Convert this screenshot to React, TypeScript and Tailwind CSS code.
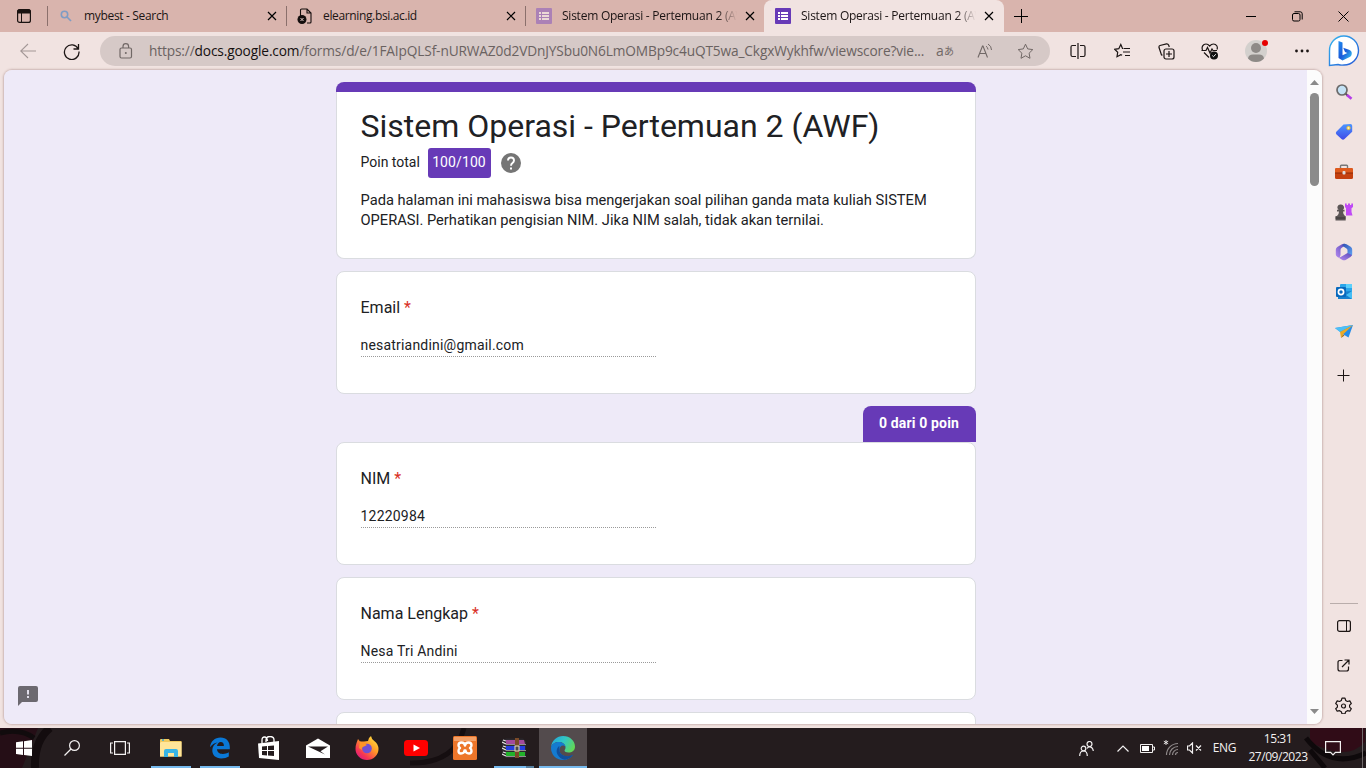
import React from "react";

type IconProps = { w: number; h?: number; vb?: string; className?: string; children: React.ReactNode };

function Icon({ w, h = w, vb, className = "", children }: IconProps) {
  return (
    <svg
      width={w}
      height={h}
      viewBox={vb ?? `0 0 ${w} ${h}`}
      fill="none"
      stroke="currentColor"
      className={"block shrink-0 " + className}
    >
      {children}
    </svg>
  );
}

function Cell({ className, children }: { className: string; children?: React.ReactNode }) {
  return <div className={"flex shrink-0 items-center justify-center " + className}>{children}</div>;
}

const CloseX = () => (
  <Icon w={10}>
    <path d="M1 1l8 8M9 1l-8 8" strokeWidth="1.2" />
  </Icon>
);

const FormsIcon = ({ faded }: { faded?: boolean }) => (
  <Icon w={16} className={faded ? "-ml-px opacity-50" : "-ml-px"}>
    <rect width="16" height="16" rx="1" fill={faded ? "#7f4fc0" : "#673ab7"} stroke="none" />
    <path d="M3 5h2M3 8h2M3 11h2M6 5h7M6 8h7M6 11h7" stroke="#fff" strokeWidth="2" />
  </Icon>
);

function Tab({ icon, title, titleClass, active }: { icon: React.ReactNode; title: string; titleClass: string; active?: boolean }) {
  return (
    <div
      className={
        "flex h-8 shrink-0 items-center pr-2.5 " +
        (active ? "-ml-px w-60 rounded-t-lg bg-[#f1e3e1] pl-3" : "w-[239px] pl-[11px]")
      }
    >
      <div className="flex w-[25px] shrink-0 items-center">{icon}</div>
      <div className="w-[176px] shrink-0 overflow-hidden">
        <span className={"block whitespace-nowrap text-[12px] leading-4 text-[#1b1414] " + titleClass}>{title}</span>
      </div>
      <div className="ml-auto pr-[0.5px]">
        <CloseX />
      </div>
    </div>
  );
}

const Sep = () => <div className="-ml-px h-5 w-px shrink-0 bg-[#8b706c]" />;

function TabStrip() {
  const fade = "[mask-image:linear-gradient(to_right,#000_155px,transparent_175px)]";
  return (
    <div className="flex h-8 items-center bg-[#d9b4ad]">
      <Cell className="w-12">
        <Icon w={14} className="text-[#1a1210]">
          <rect x=".6" y=".6" width="12.8" height="12.8" rx="2" strokeWidth="1.2" />
          <path d="M1 1h12v3H1zM4.5 4v9" fill="currentColor" strokeWidth="1" />
        </Icon>
      </Cell>
      <Sep />
      <Tab
        title="mybest - Search"
        titleClass="tracking-[-0.33px]"
        icon={
          <Icon w={12} className="ml-px text-[#7f9cc4]">
            <circle cx="4.5" cy="4.5" r="3.2" strokeWidth="1.6" />
            <path d="M7 7l4 4" strokeWidth="1.7" />
          </Icon>
        }
      />
      <Sep />
      <Tab
        title="elearning.bsi.ac.id"
        titleClass="tracking-[-0.36px]"
        icon={
          <Icon w={16} className="-ml-px text-[#140e0d]">
            <path d="M3.5 8V2.2Q3.500 1 4.700 1H10l4 4v9q0 1-1 1h-3M10 1v4h4" strokeWidth="1.1" />
            <circle cx="5" cy="11.500" r="4.500" fill="currentColor" stroke="none" />
            <path d="M3.500 10l3 3M6.500 10l-3 3" stroke="#e8d0cc" strokeWidth="1" />
          </Icon>
        }
      />
      <Sep />
      <Tab title="Sistem Operasi - Pertemuan 2 (AWF)" titleClass={"tracking-[-0.24px] " + fade} icon={<FormsIcon faded />} />
      <Tab title="Sistem Operasi - Pertemuan 2 (AWF)" titleClass={"tracking-[-0.24px] " + fade} icon={<FormsIcon />} active />
      <Cell className="w-[34px]">
        <Icon w={14} className="text-black">
          <path d="M7.500 0v14M0 7.500h14" />
        </Icon>
      </Cell>
      <div className="ml-auto flex">
        <Cell className="w-[46px]">
          <Icon w={10} className="text-black">
            <path d="M0 5.500h10" />
          </Icon>
        </Cell>
        <Cell className="w-[46px]">
          <Icon w={11} className="text-black">
            <rect x=".5" y="2.500" width="7.500" height="7.500" rx="1.500" />
            <path d="M2.500 .8h5.700q2 0 2 2v5.700" />
          </Icon>
        </Cell>
        <Cell className="w-[46px]">
          <Icon w={11} className="text-black">
            <path d="M.5 .5l10 10M10.500 .5l-10 10" />
          </Icon>
        </Cell>
      </div>
    </div>
  );
}

function Toolbar() {
  return (
    <div className="flex h-[38px] items-center bg-[#f1e3e1] text-[#1c1514]">
      <Cell className="w-[56px]">
        <Icon w={16} className="text-[#a39796]">
          <path d="M.7 8H16M8 1L.7 8 8 15" strokeWidth="1.1" />
        </Icon>
      </Cell>
      <Cell className="w-[31px]">
        <Icon w={17}>
          <path d="M15.300 6A7.300 7.300 0 1 0 16 8.500M15.500 1v5h-5" strokeWidth="1.3" />
        </Icon>
      </Cell>
      <div className="ml-[13px] flex h-[30px] w-[950px] shrink-0 items-center rounded-full bg-[#d6c9c7] text-[#716866]">
        <Cell className="ml-[19px] w-[14px]">
          <Icon w={14} h={16}>
            <rect x="1" y="5" width="11.500" height="10" rx="1.500" strokeWidth="1.2" />
            <path d="M4 5V3.500a2.800 2.800 0 0 1 5.600 0V5" strokeWidth="1.2" />
            <circle cx="6.800" cy="10" r="1" fill="currentColor" stroke="none" />
          </Icon>
        </Cell>
        <div className="ml-4 w-[780px] shrink-0 whitespace-nowrap text-[13.700px] leading-5 tracking-[-0.135px] text-[#6a6261]">
          https://<span className="text-[#151010]">docs.google.com</span>
          /forms/d/e/1FAIpQLSf-nURWAZ0d2VDnJYSbu0N6LmOMBp9c4uQT5wa_CkgxWykhfw/viewscore?vie...
        </div>
        <Cell className="w-8 text-[14px] leading-4">
          a<span className="font-['Noto_Sans_CJK_JP',sans-serif] text-[10px]">あ</span>
        </Cell>
        <Cell className="ml-2 w-8">
          <Icon w={16}>
            <path d="M1 14.500L5.500 3h.5l4.500 11.500M2.700 10.500h6.100" strokeWidth="1.100" />
            <path d="M9 3.200q1.800 1 2 3.300M11 1q3.500 2 3.500 6" strokeWidth="1" />
          </Icon>
        </Cell>
        <Cell className="ml-2 w-8">
          <Icon w={17}>
            <path d="M8.500 1.200l2.200 4.700 5.100.7-3.700 3.600.9 5.100-4.500-2.500L4 15.300l.9-5.100L1.200 6.600l5.100-.7z" strokeLinejoin="round" />
          </Icon>
        </Cell>
      </div>
      <Cell className="ml-[5px] w-[45px]">
        <Icon w={16}>
          <path d="M6 2.500H2.500Q1 2.500 1 4v8q0 1.500 1.500 1.500H6M10 2.500h3.500Q15 2.500 15 4v8q0 1.500-1.500 1.500H10M8 0v16" strokeWidth="1.200" />
        </Icon>
      </Cell>
      <Cell className="w-[44px]">
        <Icon w={16}>
          <path d="M9.500 5.500h-1L6.800 1.500 4.800 5.700.6 6.300 3.700 9.300 3 13.700 6.800 11.600l1.300.7M10 5.500h6M9 9h7M11 12.500h5" strokeWidth="1.200" />
        </Icon>
      </Cell>
      <Cell className="w-[44px]">
        <Icon w={17}>
          <rect x="6" y="6" width="10" height="10" rx="2" strokeWidth="1.200" />
          <path d="M11 8v6M8 11h6M4.500 12.200L3.500 12 1 4.500Q.7 3 2 2.500l6.500-1.700Q10 .6 10.600 2l.7 2" strokeWidth="1.200" />
        </Icon>
      </Cell>
      <Cell className="w-[44px]">
        <Icon w={18}>
          <path d="M1.500 8C.3 5 2 2 5 2q2 0 3.700 2Q10.400 2 12.500 2c3 0 4.500 3 3.500 5.500M3 10.500l5 5M.5 8.500H5l1.500-3L9 11l2-4 1 1.500h4" strokeWidth="1.200" />
          <circle cx="13" cy="13.500" r="4" fill="#111" stroke="none" />
          <path d="M11.300 13.500l1.200 1.200 2.300-2.500" stroke="#eee" />
        </Icon>
      </Cell>
      <Cell className="w-[48px]">
        <div className="relative">
          <Icon w={22}>
            <circle cx="11" cy="11" r="11" fill="#d3d0cd" stroke="none" />
            <circle cx="11" cy="8" r="5" fill="#8e8a87" stroke="none" />
            <path d="M3 18.500Q3.500 14.500 8 14.500h6q4.500 0 5 4-3.200 3.500-8 3.500t-8-3.500z" fill="#8e8a87" stroke="none" />
          </Icon>
          <div className="absolute -right-px top-0 size-1.5 rounded-full bg-[#e60000]" />
        </div>
      </Cell>
      <Cell className="w-[44px]">
        <Icon w={14} h={4}>
          <g fill="currentColor" stroke="none">
            <circle cx="1.500" cy="2" r="1.400" />
            <circle cx="7" cy="2" r="1.400" />
            <circle cx="12.500" cy="2" r="1.400" />
          </g>
        </Icon>
      </Cell>
      <Cell className="w-[40px]">
        <Icon w={32}>
          <defs>
            <linearGradient id="ring" x1="0" y1="0" x2="1" y2="1">
              <stop offset="0" stopColor="#35b6ee" />
              <stop offset="1" stopColor="#2457d6" />
            </linearGradient>
            <linearGradient id="bee" x1="0" y1="0" x2="1" y2="1">
              <stop offset="0" stopColor="#1f8df0" />
              <stop offset=".5" stopColor="#1b58d8" />
              <stop offset="1" stopColor="#38cdf2" />
            </linearGradient>
          </defs>
          <path d="M1.500 30.500V16A14.500 14.500 0 1 1 16 30q-3 .5-6-.5z" fill="#fff" stroke="url(#ring)" strokeWidth="1.400" />
          <path d="M10.500 6l4 1.500v12.800l4.800-2.300-2.300-1-1.800-4.300 5.800 2q3.300 1.200 2.700 4.500-.3 1.800-2 2.900L14.500 25.500l-4-2.500z" fill="url(#bee)" stroke="none" />
        </Icon>
      </Cell>
    </div>
  );
}

function Field({ label, value }: { label: string; value: string }) {
  return (
    <div className="h-[123px] rounded-lg border border-[#dadce0] bg-white px-6 pt-6 text-[#202124]">
      <div className="text-[16px] leading-6">
        {label} <span className="text-[#d93025]">*</span>
      </div>
      <div className="mt-3.5 h-[23px] w-[295px] border-b border-dotted border-[#9a9a9a] text-[14px] leading-[23px] tracking-[0.2px]">
        {value}
      </div>
    </div>
  );
}

function FormPage() {
  return (
    <div className="relative h-[654px] min-w-0 grow overflow-hidden bg-[#eeeaf8] pl-[331.500px] pt-3 font-[Roboto,sans-serif]">
      <div className="flex w-[640px] flex-col gap-3">
        <div className="h-[177px] rounded-lg border border-[#dadce0] border-t-0 bg-white text-[#202124]">
          <div className="-mx-px h-2.5 rounded-t-lg bg-[#673ab7]" />
          <div className="px-6">
            <h1 className="pt-[14px] text-[32px] leading-[40px] whitespace-nowrap">Sistem Operasi - Pertemuan 2 (AWF)</h1>
            <div className="mt-0.5 flex h-[30px] items-center text-[14px]">
              <span className="w-[59px] pb-0.5 whitespace-nowrap">Poin total</span>
              <span className="ml-2 h-[30px] w-[63px] rounded-[3px] bg-[#673ab7] text-center leading-[29px] tracking-[0.1px] text-white">
                100/100
              </span>
              <Icon w={20} className="ml-2.5">
                <circle cx="10" cy="10" r="10" fill="#757575" stroke="none" />
                <path d="M7 7.500q0-3 3-3t3 3q0 1.300-1.500 2.400Q10 11 10 12.700" stroke="#fff" strokeWidth="1.900" />
                <path d="M9 14.500h2v2H9z" fill="#fff" stroke="none" />
              </Icon>
            </div>
            <p className="mt-3 text-[14.670px] leading-5 whitespace-nowrap">
              Pada halaman ini mahasiswa bisa mengerjakan soal pilihan ganda mata kuliah SISTEM
              <br />
              OPERASI. Perhatikan pengisian NIM. Jika NIM salah, tidak akan ternilai.
            </p>
          </div>
        </div>
        <Field label="Email" value="nesatriandini@gmail.com" />
        <div className="flex flex-col">
          <div className="h-9 w-[113px] self-end rounded-t-lg bg-[#673ab7] text-center text-[14px] leading-[35px] font-bold tracking-[0.15px] text-white">
            0 dari 0 poin
          </div>
          <Field label="NIM" value="12220984" />
        </div>
        <Field label="Nama Lengkap" value="Nesa Tri Andini" />
        <div className="h-[123px] rounded-lg border border-[#dadce0] bg-white" />
      </div>
      <Icon w={20} className="absolute bottom-[18px] left-[14px]">
        <path d="M2 0h16q2 0 2 2v12q0 2-2 2H4l-4 4V2q0-2 2-2z" fill="#6c6970" stroke="none" />
        <path d="M10 4v4.500M10 10v2" stroke="#eeeaf8" strokeWidth="1.800" />
      </Icon>
    </div>
  );
}

function ScrollBar() {
  return (
    <div className="flex h-[654px] w-[15px] shrink-0 flex-col items-center bg-[#fcfcfc]">
      <Icon w={9} h={5} className="mt-2.5">
        <path d="M4.500 0L9 5H0z" fill="#8a8a8a" stroke="none" />
      </Icon>
      <div className="mt-2 h-[93px] w-[9px] rounded-full bg-[#8b8b8b]" />
      <Icon w={9} h={5} className="mt-auto mb-2.5">
        <path d="M4.500 5L9 0H0z" fill="#8a8a8a" stroke="none" />
      </Icon>
    </div>
  );
}

function SideBar() {
  const c = "h-10 w-full";
  return (
    <div className="flex h-[658px] w-[43px] shrink-0 flex-col pt-0.5 text-[#1c1514]">
      <Cell className={c}>
        <Icon w={18}>
          <path d="M10.500 10.500l2 2" stroke="#555" strokeWidth="2" />
          <path d="M12 12l4.500 3.700" stroke="#b63be8" strokeWidth="2.700" />
          <circle cx="7" cy="7" r="5" fill="#c4e2f5" stroke="#6c6a6a" strokeWidth="1.700" />
        </Icon>
      </Cell>
      <Cell className={c}>
        <Icon w={18}>
          <defs>
            <linearGradient id="tag" x1="0" y1="0" x2="0" y2="1">
              <stop offset="0" stopColor="#4c96ff" />
              <stop offset="1" stopColor="#3f49e8" />
            </linearGradient>
          </defs>
          <path d="M8.500 1.500L15.500 1q1.700 0 1.700 1.700v6L9.500 16q-1.500 1.500-3 0L1.300 11.300q-1-1.300 0-2.600z" fill="url(#tag)" stroke="none" />
          <circle cx="13.500" cy="5" r="1.700" fill="#fff4b0" stroke="#e0b93b" />
        </Icon>
      </Cell>
      <Cell className={c}>
        <Icon w={18} h={16}>
          <path d="M5.500 4V2q0-.8.800-.8h5.400q.8 0 .8.800v2" stroke="#777" strokeWidth="1.400" />
          <rect x="0" y="4" width="18" height="11" rx="1.500" fill="#c4400f" stroke="none" />
          <path d="M0 5.500Q0 4 1.500 4h15Q18 4 18 5.500V9H0z" fill="#df5a1d" stroke="none" />
          <path d="M0 9h18" stroke="#8c2b08" />
          <rect x="7.500" y="7" width="3" height="3.500" rx="1" fill="#ddd" stroke="none" />
        </Icon>
      </Cell>
      <Cell className={c}>
        <Icon w={18}>
          <path d="M10 .5h1.700V2H13V.5h2V2h1.300V.5H18V4l-1.500 1.300V9l1 3.500H11V5.300L10 4z" fill="#c04af5" stroke="none" />
          <path d="M6 1.500a3 3 0 0 1 2 5.300h1.500v1.700H8q0 3 2 4.500h.7v4.500H.5V13H2q2-1.500 2-4.500H2V6.800h1.500A3 3 0 0 1 6 1.500z" fill="#5c5656" stroke="none" />
          <path d="M.5 15h10" stroke="#393434" />
        </Icon>
      </Cell>
      <Cell className={c}>
        <Icon w={18}>
          <defs>
            <linearGradient id="loopA" x1="0" y1="1" x2="1" y2="0">
              <stop offset="0" stopColor="#b48af0" />
              <stop offset="1" stopColor="#5a4bb8" />
            </linearGradient>
            <linearGradient id="loopB" x1="0" y1="0" x2="1" y2="1">
              <stop offset="0" stopColor="#2f4fb0" />
              <stop offset="1" stopColor="#5fa4f5" />
            </linearGradient>
          </defs>
          <path d="M9.500 .8Q8 .6 6.500 1.500L2.300 4Q.8 5 .8 6.800v4.400q0 1.700 1.400 2.600l1 .6Q5.500 14.500 5.500 12V7q0-1.500 1.300-2.300L9 3.300z" fill="url(#loopA)" stroke="none" />
          <path d="M8.500 .9Q10 .4 11.500 1.300l4.200 2.500q1.500 1 1.500 2.700v4.600q0 1-.6 1.700L12.500 10.500V7.300q0-1.200-1-1.900L8 3.300q-1.500-1.200.5-2.400z" fill="url(#loopB)" stroke="none" />
          <path d="M3 14.300q2.500.4 4-1L12.500 10l4.500 2q-.5 1.300-1.500 1.900L11 16.700q-2 1-4 0z" fill="url(#loopA)" stroke="none" />
        </Icon>
      </Cell>
      <Cell className={c}>
        <Icon w={18}>
          <rect x="5" y="1" width="12" height="15" rx="1" fill="#2ba6ea" stroke="none" />
          <path d="M11 1h6v4h-6z" fill="#5bd0fb" stroke="none" />
          <path d="M3 9l14-1v8H3z" fill="#1680ce" stroke="none" />
          <path d="M11 12l6-4v8z" fill="#44bdf4" stroke="none" />
          <rect x="1" y="4" width="10" height="10" rx="1" fill="#0869bd" stroke="none" />
          <circle cx="6" cy="9" r="2.600" stroke="#fff" strokeWidth="1.700" />
        </Icon>
      </Cell>
      <Cell className={c}>
        <Icon w={18} h={16} className="-mt-0.5">
          <path d="M0 5L18 2l-4.500 12.500-5-3z" fill="#258ce9" stroke="none" />
          <path d="M0 5L18 2 5 9z" fill="#4dc0f6" stroke="none" />
          <path d="M5 9L18 2 8 11.500 6 15z" fill="#edaa25" stroke="none" />
          <path d="M6 15l2-3.500 1.500 1z" fill="#a46b10" stroke="none" />
        </Icon>
      </Cell>
      <Cell className="mt-[3px] h-10 w-full">
        <Icon w={13}>
          <path d="M6.500 .5v12M.5 6.500h12" />
        </Icon>
      </Cell>
      <div className="mt-[208px] ml-2 h-px w-7 shrink-0 bg-[#b9adab]" />
      <Cell className="mt-0.5 h-10 w-full">
        <Icon w={14}>
          <rect x=".6" y="1.600" width="12.800" height="10.800" rx="2" strokeWidth="1.200" />
          <path d="M9.500 2v10" />
        </Icon>
      </Cell>
      <Cell className={c}>
        <Icon w={13} className="-mt-px">
          <path d="M5.500 1.500H3Q1 1.500 1 3.500V10q0 2 2 2h6.500q2 0 2-2V7.500M5 8l7-7M7.500 1H12v4.500" strokeWidth="1.200" />
        </Icon>
      </Cell>
      <Cell className={c}>
        <Icon w={17} className="-mt-0.5">
          <path d="M7 1.200h3l.7 2.300 1.700 1 2.400-.6 1.500 2.600-1.700 1.600v2l1.700 1.600-1.500 2.500-2.400-.5-1.700 1-.7 2.100H7l-.7-2.100-1.700-1-2.400.5L.7 11.700l1.700-1.600v-2L.7 6.500l1.500-2.600 2.400.6 1.700-1z" strokeWidth="1.200" strokeLinejoin="round" />
          <circle cx="8.500" cy="9" r="2" strokeWidth="1.200" />
        </Icon>
      </Cell>
    </div>
  );
}

function TaskApp({ bar, active, children }: { bar?: boolean; active?: boolean; children: React.ReactNode }) {
  return (
    <div className={"flex h-10 shrink-0 flex-col items-center " + (active ? "ml-px w-12 bg-[#534b4d]" : "w-[49px]")}>
      <div className="flex h-[38px] items-center justify-center pt-0.5">{children}</div>
      <div className={"h-0.5 " + (active ? "w-full bg-[#76b9ed]" : bar ? "w-10 bg-[#76b9ed]" : "w-0")} />
    </div>
  );
}

function TaskBar() {
  return (
    <div className="relative flex h-10 items-center overflow-hidden bg-[#241c1e] text-[#f3f1f1]">
      <svg className="absolute inset-0" width="1366" height="40" viewBox="0 0 1366 40" fill="none">
        <path d="M0 0h38L22 40H0z" fill="#250e16" />
        <path d="M0 5Q20 0 34 10" stroke="#110b0d" strokeWidth="5" />
        <path d="M50 0Q34 13 35 40" stroke="#130c0e" strokeWidth="8" />
        <path d="M410 35Q455 36 464 0" stroke="#150e10" strokeWidth="5" />
        <path d="M1310 0h55v14q-18 20-55 0z" fill="#300c17" />
        <path d="M1306 10q25 32 60 15M1325 40L1310 22" stroke="#0e090b" strokeWidth="5" />
      </svg>
      <div className="relative flex h-10 w-full items-center">
        <Cell className="w-12">
          <Icon w={16}>
            <path d="M0 2.300L7 1.300v6.400H0zM8 1.200L16 0v7.700H8zM0 8.700h7v6.200l-7-1zM8 8.700h8V16l-8-1.100z" fill="#fff" stroke="none" />
          </Icon>
        </Cell>
        <Cell className="w-12">
          <Icon w={16}>
            <circle cx="10.500" cy="5.500" r="4.900" strokeWidth="1.200" />
            <path d="M7 9l-6.500 6.500" strokeWidth="1.300" />
          </Icon>
        </Cell>
        <Cell className="w-12">
          <Icon w={20} h={16}>
            <path d="M4.600 1.600h10.800v12.800H4.600zM3 3H.6v10H3M17 3h2.400v10H17" strokeWidth="1.200" />
          </Icon>
        </Cell>
        <div className="ml-0.5 flex">
          <TaskApp bar>
            <Icon w={22} h={18}>
              <path d="M0 1q0-1 1-1h8l1 2h11.500v15.500H0z" fill="#f1c95d" stroke="none" />
              <path d="M1 3h20.500v14.500H0V4z" fill="#ffe599" stroke="none" />
              <path d="M2 1h2" stroke="#31a9dc" strokeWidth="1.500" />
              <path d="M4 18v-6q0-2 2-2h10q2 0 2 2v6h-4v-4H8v4z" fill="#38b4e5" stroke="none" />
            </Icon>
          </TaskApp>
          <TaskApp bar>
            <Icon w={20} h={22}>
              <path d="M0 10.200C.6 4.200 4.800.4 10.500.4c6 0 9.300 4.200 9.300 9.600v2.300H7c.2 3 2.500 4.700 5.800 4.700 2.300 0 4.200-.6 6-1.700v4.300c-2.100 1.200-4.500 1.900-7.500 1.900-5.700 0-9-3.400-9-8.200 0-3.700 2-6.500 5.400-7.900C4.300 5.800 2 7.300 0 10.200zM7 9h6.900c0-2.500-1-4-3.200-4C8.700 5 7.400 6.700 7 9z" fill="#0a78d7" stroke="none" />
            </Icon>
          </TaskApp>
          <TaskApp>
            <Icon w={22} h={24}>
              <path d="M4 7V4q0-3 2.500-3Q9 1 9.500 5M8 6V4q0-3.500 4-3.500 4 0 4 3.500v3" stroke="#fff" strokeWidth="1.300" />
              <path d="M0 7.500L21 5v19L1 22z" fill="#fff" stroke="none" />
              <path d="M4 10.500l5-.5v4H4zM10 10l6-.5V14h-6zM4 15h5v4.500l-5-.5zM10 15h6v5l-6-.5z" fill="#241c1e" stroke="none" />
            </Icon>
          </TaskApp>
          <TaskApp>
            <Icon w={24} h={20}>
              <path d="M0 7.500L12 .5l12 7V20H0z" fill="#fff" stroke="none" />
              <path d="M2 8.500h20l-7.500 4.700 4.500 3.300z" fill="#241c1e" stroke="none" />
            </Icon>
          </TaskApp>
          <TaskApp>
            <Icon w={24}>
              <defs>
                <linearGradient id="fox" x1="1" y1="0" x2="0.200" y2="1">
                  <stop offset="0" stopColor="#fff14a" />
                  <stop offset=".45" stopColor="#ff9b27" />
                  <stop offset=".8" stopColor="#f63355" />
                  <stop offset="1" stopColor="#d81b83" />
                </linearGradient>
              </defs>
              <path d="M13 5Q13 2 16 0q.5 3 3 4.700 4.500 3.500 4.500 8.300a11.500 11 0 0 1-23 0q0-3.500 1-6L3 3l2 2.500h4z" fill="url(#fox)" stroke="none" />
              <circle cx="12" cy="12.500" r="4.800" fill="#7150d3" stroke="none" />
              <path d="M5 5.500Q9 6 12 9l-3 1.500Q6 11 7 14L4 12z" fill="#ff9526" stroke="none" />
            </Icon>
          </TaskApp>
          <TaskApp>
            <Icon w={24} h={16}>
              <rect width="24" height="16" rx="3.500" fill="#f00" stroke="none" />
              <path d="M9.500 4.500l6.500 3.500-6.500 3.500z" fill="#fff" stroke="none" />
            </Icon>
          </TaskApp>
          <TaskApp>
            <Icon w={24}>
              <rect width="24" height="24" rx="1.500" fill="#ed762a" stroke="none" />
              <path d="M1 1h22v4H1z" fill="#f4a168" stroke="none" />
              <path d="M12 9.500Q11.500 6.500 8.500 6.500 5.500 6.500 5.500 9.300q0 1.700 1.500 2.700-1.500 1-1.500 3Q5.500 17.500 8 17.500q3.300 0 3.500-3h1q.2 3 3.500 3 2.500 0 2.500-2.500 0-2-1.500-3 1.500-1 1.500-2.700 0-2.800-3-2.800T12 9.500z" stroke="#fff" strokeWidth="2.400" strokeLinejoin="round" />
            </Icon>
          </TaskApp>
          <div className="flex h-10 w-[49px] shrink-0 flex-col items-center">
            <div className="flex h-[38px] items-center pt-0.5">
              <Icon w={24} h={20}>
                <path d="M0 2l4-1.500h17l3 3v14L20 20H4l-4-4z" fill="#2b272c" stroke="none" />
                <path d="M4 2h18l1 4H4z" fill="#a34a9c" stroke="none" />
                <path d="M4 8h19v4H4z" fill="#243ee0" stroke="none" />
                <path d="M4 14h19v4H4z" fill="#22b32b" stroke="none" />
                <path d="M0 4l4 2M0 10l4 2M0 16l4 2M1 2l3 1M1 8l3 1M1 14l3 1" stroke="#e4e4e4" strokeWidth="1.200" />
                <path d="M4 6.500h20M4 12.500h20M4 18.500h20" stroke="#bbb" strokeWidth=".7" />
                <path d="M13 0h4v20h-4z" fill="#7b4a28" stroke="none" />
                <rect x="13" y="8" width="4" height="5" fill="#494949" stroke="#e8ddbd" />
              </Icon>
            </div>
            <div className="flex h-0.5">
              <div className="w-8 bg-[#76b9ed]" />
              <div className="w-2 bg-[#557f9f]" />
            </div>
          </div>
          <TaskApp active>
            <Icon w={24}>
              <defs>
                <linearGradient id="wave" x1="0" y1="0.200" x2="1" y2="0.600">
                  <stop offset="0" stopColor="#22a6dc" />
                  <stop offset=".5" stopColor="#32c7c4" />
                  <stop offset="1" stopColor="#62d755" />
                </linearGradient>
              </defs>
              <path d="M0 11C1 4 6 0 12 0c7 0 12 5 12 10.500 0 4-3 6-6.500 6-2.500 0-4-1-4-2 0-.8 1-1 1-3C14.500 8 11 6 8 6 4 6 1 8 0 11z" fill="url(#wave)" stroke="none" />
              <path d="M0 12C0 8.500 3.500 6 8 6c3.500 0 6.500 2.500 6.500 5-.5-1-1.500-1.500-2.500-1.500-2 0-3.500 2-3.500 4.500 0 4 4 6.500 8 6.500 2 0 4-.6 5.700-2C20 22 16.500 24 12 24 5 24 0 18.500 0 12z" fill="#147bd0" stroke="none" />
              <path d="M8.300 10C5.500 12 5 15.500 6.500 18.500 8 21.500 11 23.500 14 23.800c3.500-.6 6.500-2.500 8.200-5.300-5 3.500-13.700 1.500-13.700-4.500z" fill="#114f9b" stroke="none" />
            </Icon>
          </TaskApp>
        </div>
        <div className="ml-auto flex items-center">
          <Cell className="w-[41px]">
            <Icon w={15}>
              <circle cx="10.500" cy="3" r="2.500" strokeWidth="1.200" />
              <circle cx="4.500" cy="7.500" r="2.300" strokeWidth="1.200" />
              <path d="M.7 15q0-5 3.800-5t3.800 5M8 7.500q1-1.700 2.500-1.700 3.300 0 3.800 4.200" strokeWidth="1.200" />
            </Icon>
          </Cell>
          <Cell className="w-8">
            <Icon w={12} h={7}>
              <path d="M.5 6.500L6 1l5.500 5.500" strokeWidth="1.200" />
            </Icon>
          </Cell>
          <Cell className="w-4">
            <Icon w={15} h={9}>
              <path d="M.5 .5h12v8H.5zM13 3h1.500v3H13" />
              <path d="M2 2h7v5H2z" fill="#fff" stroke="none" />
            </Icon>
          </Cell>
          <Cell className="ml-1.5 w-5">
            <Icon w={16}>
              <path d="M3 0v5M.8 1.200l4.400 2.600M5.200 1.200L.8 3.800" strokeWidth=".9" />
              <g stroke="#8e8889" strokeWidth="1.200">
                <path d="M3.500 15A11.500 11.500 0 0 1 15 3.500M6.500 15A8.500 8.500 0 0 1 15 6.500M9.500 15A5.500 5.500 0 0 1 15 9.500M12.500 15a2.500 2.500 0 0 1 2.500-2.500" />
              </g>
            </Icon>
          </Cell>
          <Cell className="ml-[5px] w-4">
            <Icon w={15} h={12}>
              <path d="M.5 4v4h2l3 3V1l-3 3zM9 3.500l5 5M14 3.500l-5 5" strokeWidth="1.200" />
            </Icon>
          </Cell>
          <div className="w-[45px] text-center text-[12px] leading-4 tracking-[-0.3px]">ENG</div>
          <div className="ml-px w-[60px] text-center text-[12px] leading-[18px] tracking-[-0.45px] whitespace-nowrap">
            15:31
            <br />
            27/09/2023
          </div>
          <Cell className="w-[50px]">
            <Icon w={16}>
              <path d="M.6 1.600h14.800v10.800h-5L8 14.800 5.600 12.400h-5z" strokeWidth="1.200" />
            </Icon>
          </Cell>
          <div className="ml-1 mr-[3px] h-10 w-px bg-[#6f696a]" />
        </div>
      </div>
    </div>
  );
}

export default function App() {
  return (
    <div className="flex h-[768px] w-[1366px] flex-col overflow-hidden bg-[#f1e3e1] font-['Open_Sans','Noto_Sans',sans-serif]">
      <TabStrip />
      <Toolbar />
      <div className="flex h-[658px] shrink-0 pl-1">
        <div className="flex h-[654px] w-[1318px] shrink-0 overflow-hidden rounded-lg shadow-[0_0_2px_1px_rgba(110,70,65,0.28)]">
          <FormPage />
          <ScrollBar />
        </div>
        <SideBar />
      </div>
      <TaskBar />
    </div>
  );
}
